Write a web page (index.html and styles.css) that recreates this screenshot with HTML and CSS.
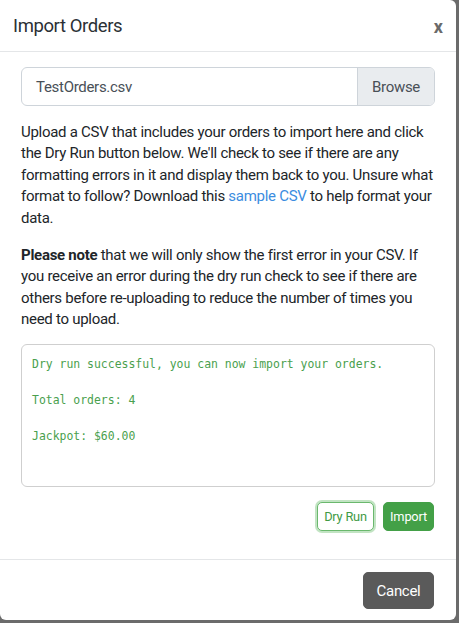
FILE: index.html
```html
<!DOCTYPE html>
<html lang="en">
<head>
<meta charset="utf-8">
<title>Import Orders</title>
<link rel="stylesheet" href="styles.css">
</head>
<body>
<div class="backdrop">
  <div class="modal">
    <div class="modal-header">
      <h5 class="modal-title">Import Orders</h5>
      <button class="close" type="button">x</button>
    </div>
    <div class="modal-body">
      <div class="input-group">
        <div class="file-name">TestOrders.csv</div>
        <div class="browse">Browse</div>
      </div>
      <p class="intro">Upload a CSV that includes your orders to import here and click the Dry Run button below. We'll check to see if there are any formatting errors in it and display them back to you. Unsure what format to follow? Download this <a href="#" class="link">sample CSV</a> to help format your data.</p>
      <p class="note"><strong>Please note</strong> that we will only show the first error in your CSV. If you receive an error during the dry run check to see if there are others before re-uploading to reduce the number of times you need to upload.</p>
      <div class="result">
        <div class="result-line">Dry run successful, you can now import your orders.</div>
        <div class="result-line">&nbsp;</div>
        <div class="result-line">Total orders: 4</div>
        <div class="result-line">&nbsp;</div>
        <div class="result-line">Jackpot: $60.00</div>
      </div>
      <div class="actions">
        <button class="btn btn-outline" type="button">Dry Run</button>
        <button class="btn btn-success" type="button">Import</button>
      </div>
    </div>
    <div class="modal-footer">
      <button class="btn btn-cancel" type="button">Cancel</button>
    </div>
  </div>
</div>
</body>
</html>
```

FILE: styles.css
```css
* { box-sizing: border-box; }
html, body {
  margin: 0;
  padding: 0;
  background: #6b6b6b;
}
body {
  font-family: Roboto, "Liberation Sans", Arial, sans-serif;
  color: #212529;
  width: 459px;
  height: 623px;
  overflow: hidden;
}
.backdrop {
  width: 459px;
  height: 623px;
  display: flex;
  align-items: flex-start;
  justify-content: flex-start;
}
.modal {
  width: 456px;
  height: 620px;
  background: #fff;
  border-radius: 0 6px 6px 6px;
  display: flex;
  flex-direction: column;
}
.modal-header {
  display: flex;
  align-items: center;
  justify-content: space-between;
  padding: 11px 13px 10px 13px;
  border-bottom: 1px solid #e4e6e8;
}
.modal-title {
  margin: 0;
  font-size: 18.5px;
  letter-spacing: -0.4px;
  line-height: 30px;
  font-weight: 400;
  color: #2b3035;
}
.close {
  border: 0;
  background: transparent;
  padding: 0;
  margin: 0;
  font-family: Roboto, "Liberation Sans", Arial, sans-serif;
  font-size: 18px;
  font-weight: 700;
  line-height: 20px;
  color: #6a6a6a;
  margin-top: 2px;
}
.modal-body {
  padding: 15px 21px 28px 21px;
  flex: 1;
}
.input-group {
  display: flex;
  height: 39px;
  border: 1px solid #ced4da;
  border-radius: 6px;
  overflow: hidden;
}
.file-name {
  flex: 1;
  display: flex;
  align-items: center;
  padding: 0 14px;
  font-size: 15px;
  letter-spacing: -0.3px;
  color: #495057;
}
.browse {
  width: 77px;
  display: flex;
  align-items: center;
  justify-content: center;
  background: #e9ecef;
  border-left: 1px solid #ced4da;
  font-size: 15px;
  letter-spacing: -0.3px;
  color: #495057;
}
.intro, .note {
  font-size: 15px;
  letter-spacing: -0.28px;
  line-height: 21.4px;
  margin: 16px 0 0 0;
}
.note {
  margin-bottom: 13px;
}
.note strong { font-weight: 700; }
.link {
  color: #3b8de0;
  text-decoration: none;
}
.result {
  height: 143px;
  border: 1px solid #cfcfcf;
  border-radius: 6px;
  padding: 10px 10px;
  font-family: "DejaVu Sans Mono", "Liberation Mono", monospace;
  font-size: 11.45px;
  line-height: 18px;
  color: #4a9f4e;
}
.result-line { white-space: pre; }
.actions {
  display: flex;
  justify-content: flex-end;
  align-items: center;
  gap: 9px;
  margin-top: 15px;
}
.btn {
  font-family: Roboto, "Liberation Sans", Arial, sans-serif;
  border-radius: 5px;
  cursor: pointer;
}
.btn-outline {
  height: 29px;
  width: 57px;
  padding: 0;
  font-size: 12.8px;
  letter-spacing: -0.2px;
  background: #fff;
  color: #3f9a45;
  border: 1px solid #6ab86d;
  box-shadow: 0 0 0 2px rgba(120, 195, 123, 0.45);
}
.btn-success {
  height: 29px;
  width: 51px;
  padding: 0;
  font-size: 12.8px;
  letter-spacing: -0.2px;
  background: #43a047;
  color: #fff;
  border: 1px solid #43a047;
  margin-right: 1px;
}
.modal-footer {
  display: flex;
  justify-content: flex-end;
  padding: 12px 22px 11px 21px;
  border-top: 1px solid #e4e6e8;
}
.btn-cancel {
  height: 37px;
  width: 71px;
  padding: 0;
  font-size: 15px;
  letter-spacing: -0.3px;
  background: #5a5a5a;
  color: #fff;
  border: 1px solid #5a5a5a;
}
```
